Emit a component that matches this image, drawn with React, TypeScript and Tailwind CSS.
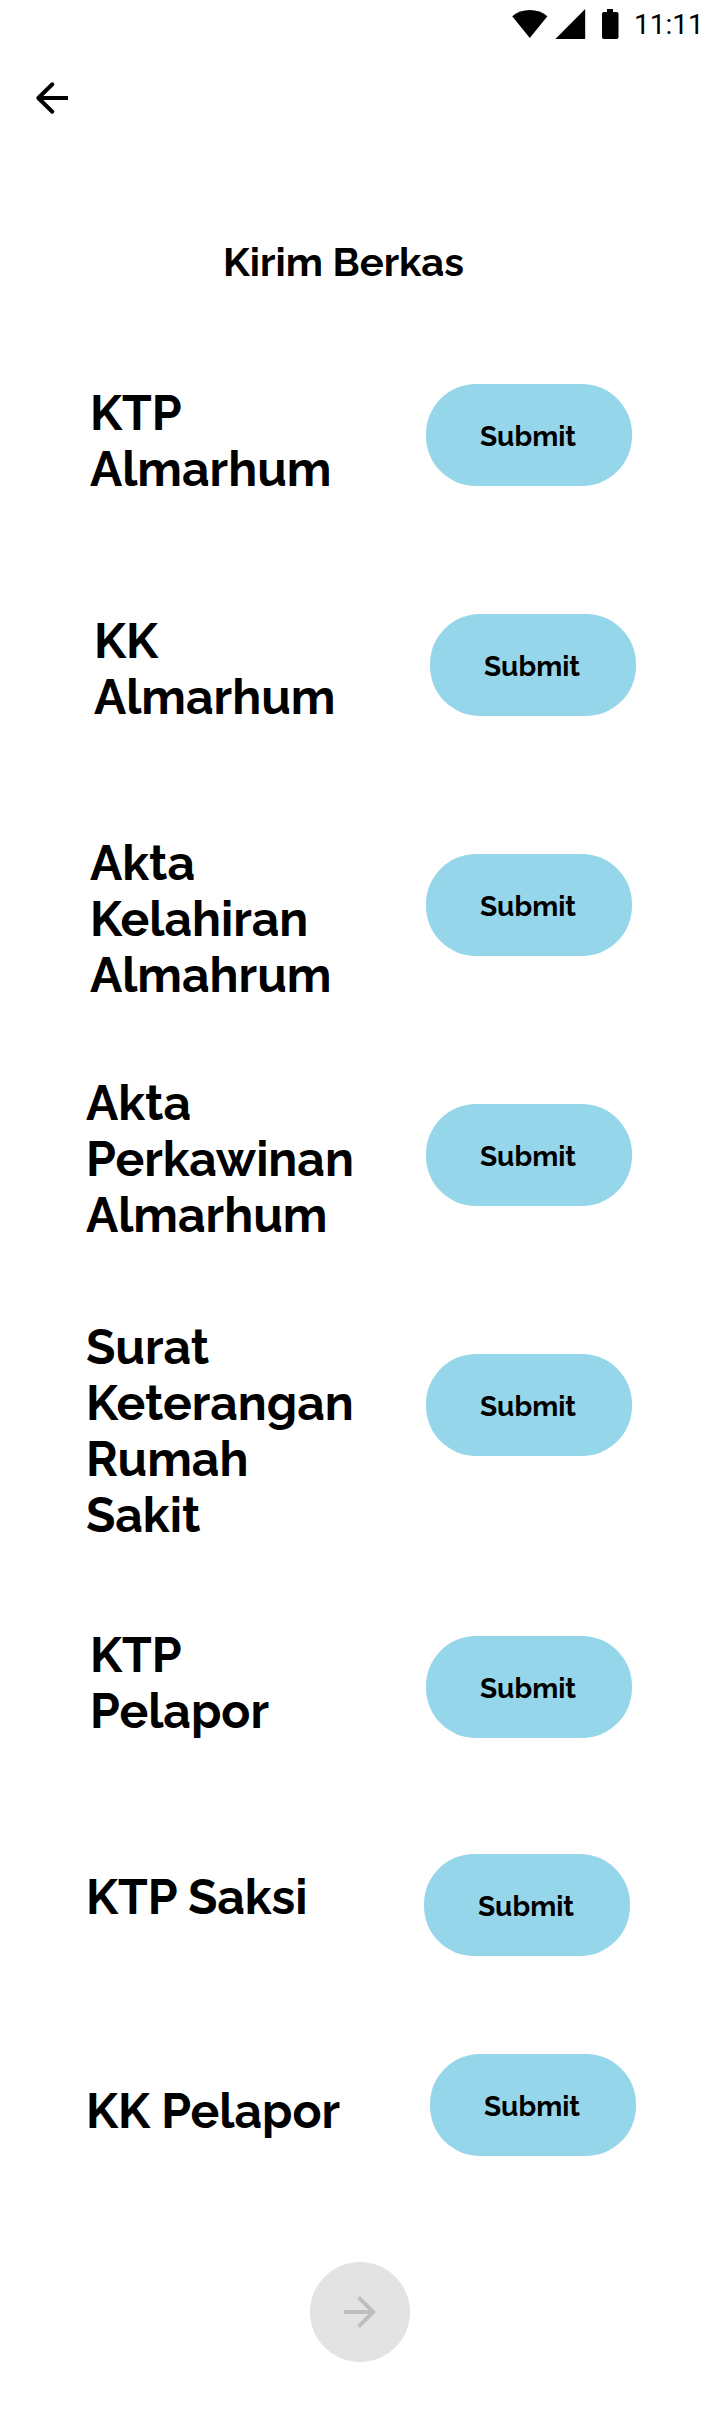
type DocumentRow = {
  lines: string[];
  row: string;
  label: string;
  button: string;
};

const documents: DocumentRow[] = [
  { lines: ["KTP", "Almarhum"], row: "h-[229px] pl-[90px]", label: "mt-px w-[336px]", button: "" },
  { lines: ["KK", "Almarhum"], row: "h-[222px] pl-[94px]", label: "w-[336px]", button: "mt-px" },
  { lines: ["Akta", "Kelahiran", "Almahrum"], row: "h-60 pl-[90px]", label: "w-[336px]", button: "mt-[19px]" },
  { lines: ["Akta", "Perkawinan", "Almarhum"], row: "h-[244px] pl-[86px]", label: "w-[340px]", button: "mt-[29px]" },
  { lines: ["Surat", "Keterangan", "Rumah", "Sakit"], row: "h-[308px] pl-[86px]", label: "w-[340px]", button: "mt-[35px]" },
  { lines: ["KTP", "Pelapor"], row: "h-[227px] pl-[90px]", label: "w-[336px]", button: "mt-[9px]" },
  { lines: ["KTP Saksi"], row: "h-[200px] pl-[86px]", label: "mt-[15px] w-[338px]", button: "" },
  { lines: ["KK Pelapor"], row: "h-52 pl-[86px]", label: "mt-[29px] w-[344px]", button: "" },
];

function StatusBar() {
  return (
    <div className="flex h-12 items-start justify-end pr-4">
      <svg className="mt-[9px] h-[30px] w-[107px]" viewBox="0 0 107 30" fill="#000">
        <path d="M0.2 7.3C5 3.2 11.1 1 17.8 1s12.800 2.200 17.600 6.300L17.800 29z" />
        <path d="M73.200 0v30H43.400z" />
        <path d="M95 0h6v3h3.700a1.800 1.800 0 0 1 1.800 1.800v23.400a1.800 1.800 0 0 1-1.800 1.800H91.800a1.800 1.800 0 0 1-1.800-1.800V4.800A1.800 1.800 0 0 1 91.800 3H95z" />
      </svg>
      <span className="mt-2 ml-[15px] w-[70px] whitespace-nowrap font-[Roboto,sans-serif] text-[28px] leading-[33px]">11:11</span>
    </div>
  );
}

export default function App() {
  return (
    <main className="flex h-[2418px] w-[720px] flex-col overflow-hidden bg-white font-[Raleway,Lato,sans-serif] text-black">
      <StatusBar />
      <header className="flex h-[190px] items-start pt-[26px] pl-7">
        <button aria-label="Kembali" className="size-12">
          <svg viewBox="0 0 48 48" className="size-12" fill="none" stroke="#000" strokeWidth="4">
            <path d="M10.500 24H40" />
            <path d="M24.300 10.300L10.300 24l14 13.700" strokeLinecap="round" strokeLinejoin="round" />
          </svg>
        </button>
      </header>
      <h1 className="h-[146px] pl-[223px] text-[40px] leading-[47px] font-bold">Kirim Berkas</h1>
      <section>
        {documents.map((doc) => (
          <div key={doc.lines.join(" ")} className={`flex items-start ${doc.row}`}>
            <h2 className={`shrink-0 text-5xl leading-[56px] font-bold ${doc.label}`}>
              {doc.lines.map((line) => (
                <span key={line} className="block">{line}</span>
              ))}
            </h2>
            <button
              className={`h-[102px] w-[206px] shrink-0 rounded-[50px] bg-[#96d6ea] pb-px pl-[54px] text-left text-[28px] leading-[33px] font-bold ${doc.button}`}
            >
              <span className="block pt-1">Submit</span>
            </button>
          </div>
        ))}
      </section>
      <button aria-label="Lanjut" className="flex size-[100px] items-center justify-center self-center rounded-full bg-[#e3e3e3]">
        <svg viewBox="0 0 24 24" className="size-12" fill="#bdbdbd">
          <path d="M12 4l-1.410 1.410L16.170 11H4v2h12.170l-5.580 5.590L12 20l8-8z" />
        </svg>
      </button>
    </main>
  );
}
